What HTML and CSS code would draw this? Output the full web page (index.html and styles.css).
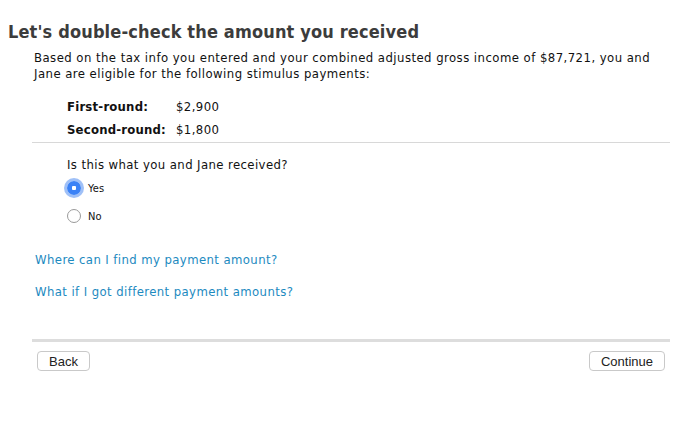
FILE: index.html
```html
<!DOCTYPE html>
<html lang="en">
<head>
  <meta charset="UTF-8">
  <title>Stimulus check</title>
  <link rel="stylesheet" href="styles.css">
</head>
<body>
  <div class="page">
    <h1 class="title">Let's double-check the amount you received</h1>
    <div class="content">
      <p class="intro">Based on the tax info you entered and your combined adjusted gross income of $87,721, you and Jane are eligible for the following stimulus payments:</p>
      <table class="amounts">
        <tr><th>First-round:</th><td>$2,900</td></tr>
        <tr><th>Second-round:</th><td>$1,800</td></tr>
      </table>
      <div class="question">
        <p>Is this what you and Jane received?</p>
        <label class="choice"><span class="radio checked"></span>Yes</label>
        <label class="choice"><span class="radio"></span>No</label>
      </div>
    </div>
    <div class="links">
      <a href="#">Where can I find my payment amount?</a>
      <a href="#">What if I got different payment amounts?</a>
    </div>
    <div class="footer">
      <button>Back</button>
      <button>Continue</button>
    </div>
  </div>
</body>
</html>
```

FILE: styles.css
```css
body {
  margin: 0;
  font-family: "DejaVu Sans Condensed", "DejaVu Sans", sans-serif;
  color: #111;
  background: #fff;
}
.page {
  width: 670px;
  padding-top: 21px;
}
.title {
  margin: 0 0 0 8px;
  font-size: 18px;
  line-height: 22px;
  letter-spacing: 0.15px;
  color: #3c3c3c;
}
.content {
  margin-left: 32px;
}
.intro {
  margin: 7px 0 0 2px;
  font-size: 13px;
  line-height: 16px;
  letter-spacing: 0.45px;
}
.amounts {
  width: 100%;
  margin-top: 14px;
  border-collapse: collapse;
  border-bottom: 1px solid #d8d8d8;
  font-size: 13px;
  line-height: 16px;
}
.amounts th {
  width: 109px;
  white-space: nowrap;
  text-align: left;
  letter-spacing: 0.2px;
  padding: 3px 0 4px 35px;
}
.amounts td {
  letter-spacing: 0.4px;
  padding: 3px 0 4px 0;
}
.question {
  padding-left: 35px;
  font-size: 13px;
  letter-spacing: 0.4px;
}
.question p {
  margin: 14px 0 2px;
}
.choice {
  display: flex;
  align-items: center;
  gap: 7px;
  height: 28px;
  font-size: 11px;
  letter-spacing: 0.2px;
}
.radio {
  width: 14px;
  height: 14px;
  border: 1px solid #9a9a9a;
  border-radius: 50%;
  box-sizing: border-box;
  background: #fff;
}
.radio.checked {
  border: none;
  background: radial-gradient(circle, #fff 0 2px, #3b82f6 2.5px);
  box-shadow: 0 0 0 3px rgba(80, 140, 240, 0.55);
}
.links {
  display: flex;
  flex-direction: column;
  gap: 15px;
  margin: 21px 0 0 35px;
  font-size: 13px;
  letter-spacing: 0.4px;
}
.links a {
  color: #1d8abf;
  text-decoration: none;
  line-height: 17px;
}
.footer {
  display: flex;
  justify-content: space-between;
  margin: 39px 0 0 32px;
  padding: 9px 5px 0;
  border-top: 3px solid #ddd;
}
.footer button {
  height: 20px;
  padding: 0 11px;
  background: #fff;
  border: 1px solid #c9c9c9;
  border-radius: 4px;
  font-family: "Liberation Sans", sans-serif;
  font-size: 13px;
  color: #222;
}
```
